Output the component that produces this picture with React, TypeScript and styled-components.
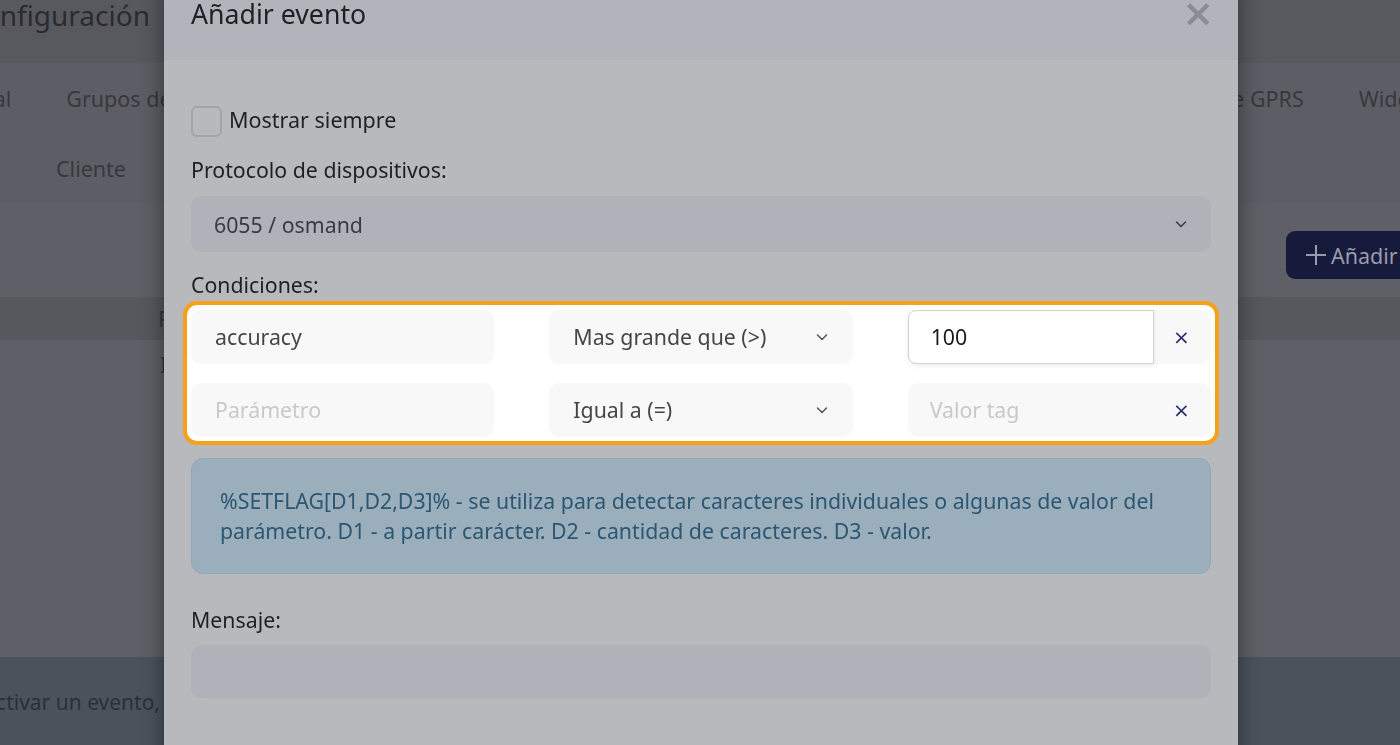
import React from "react";
import styled, { createGlobalStyle } from "styled-components";

const Global = createGlobalStyle`
  html, body { margin: 0; padding: 0; height: 100%; }
  body {
    font-family: "Noto Sans", "Open Sans", Arial, sans-serif;
    background: #5e5f66;
    overflow: hidden;
  }
  #root { height: 100%; }
`;

/* ---------- background page (dimmed) ---------- */
const Page = styled.div`
  width: 1400px;
  height: 745px;
  display: flex;
  flex-direction: column;
  background: #5f6067;
  overflow: hidden;
`;

const TopBar = styled.div`
  height: 63px;
  flex: none;
  background: #58595f;
  display: flex;
  align-items: flex-start;
`;

const PageTitle = styled.h1`
  margin: -2px 0 0 -35px;
  font-size: 28px;
  font-weight: 400;
  line-height: 34px;
  color: #2a2b30;
  white-space: nowrap;
`;

const Tabs = styled.div`
  height: 140px;
  flex: none;
  background: #5d5e65;
  display: flex;
  flex-direction: column;
`;

const TabRow = styled.div`
  height: 70px;
  display: flex;
  align-items: center;
  justify-content: space-between;
  font-size: 21.5px;
  color: #37383e;
  white-space: nowrap;
`;

const TabGroup = styled.div<{ $left?: number; $right?: number }>`
  display: flex;
  gap: 55px;
  margin-left: ${(p) => p.$left ?? 0}px;
  margin-right: ${(p) => p.$right ?? 0}px;
`;

const Toolbar = styled.div`
  height: 94px;
  flex: none;
  display: flex;
  align-items: center;
  justify-content: flex-end;
  padding-top: 10px;
  box-sizing: border-box;
`;

const AddButton = styled.div`
  height: 48px;
  width: 150px;
  margin-right: -36px;
  border-radius: 9px;
  background: #161b3c;
  color: #9a9cab;
  font-size: 21.5px;
  display: flex;
  align-items: center;
  gap: 4px;
  padding-left: 19px;
  box-sizing: border-box;
  white-space: nowrap;
  overflow: hidden;
  svg { flex: none; }
`;

const TableHead = styled.div`
  height: 43px;
  flex: none;
  background: #57585e;
  display: flex;
  align-items: center;
  padding-left: 158px;
  font-size: 21.5px;
  color: #36373c;
`;

const TableBody = styled.div`
  flex: 1;
  padding: 10px 0 0 160px;
  font-size: 21.5px;
  color: #36373c;
`;

const FooterBand = styled.div`
  display: flex;
  background: #4a535c;
`;

const Footer = styled.div`
  height: 88px;
  flex: none;
  display: flex;
  align-items: center;
  justify-content: flex-end;
  width: 164px;
  padding-right: 4px;
  font-size: 21px;
  color: #2b3037;
  white-space: nowrap;
  padding-top: 2px;
  box-sizing: border-box;
`;

/* ---------- modal ---------- */
const Overlay = styled.div`
  position: fixed;
  inset: 0;
  pointer-events: none;
`;

const Modal = styled.div`
  position: absolute;
  top: -14px;
  left: 164px;
  width: 1074px;
  height: 800px;
  background: #b8b9bd;
  box-shadow: 0 0 22px rgba(0, 0, 0, 0.45);
  display: flex;
  flex-direction: column;
`;

const ModalHeader = styled.div`
  flex: none;
  height: 74px;
  box-sizing: border-box;
  padding: 12px 27px 0 27px;
  background: #b3b4bb;
  display: flex;
  justify-content: space-between;
  align-items: flex-start;
`;

const ModalTitle = styled.h2`
  margin: 0;
  font-size: 26.7px;
  font-weight: 400;
  line-height: 32px;
  color: #1f2024;
`;

const CloseX = styled.span`
  font-size: 38px;
  line-height: 30px;
  font-weight: 700;
  color: #8b8c92;
  margin-right: -3px;
  font-family: "DejaVu Sans", "Noto Sans", sans-serif;
`;

const ModalBody = styled.div`
  padding: 46px 27px 0 27px;
  display: flex;
  flex-direction: column;
  font-size: 21.3px;
`;

const CheckRow = styled.label`
  display: flex;
  align-items: center;
  gap: 7px;
  font-size: 21.5px;
  color: #1f2024;
  height: 31px;
`;

const CheckText = styled.span`
  margin-top: -4px;
`;

const CheckBox = styled.span`
  width: 31px;
  height: 31px;
  box-sizing: border-box;
  border: 2px solid #a3a4aa;
  border-radius: 6px;
`;

const Label = styled.div<{ $top: number }>`
  margin-top: ${(p) => p.$top}px;
  line-height: 30px;
  color: #1f2024;
`;

const DimField = styled.div<{ $top?: number; $h: number }>`
  margin-top: ${(p) => p.$top ?? 11}px;
  height: ${(p) => p.$h}px;
  border-radius: 10px;
  background: #b1b2b9;
  display: flex;
  align-items: center;
  justify-content: space-between;
  padding: 0 23px;
  color: #3a3b40;
`;

const Chevron = ({ color, size = 14 }: { color: string; size?: number }) => (
  <svg width={size} height={size} viewBox="0 0 14 14" fill="none">
    <path d="M2.5 5 L7 9.5 L11.5 5" stroke={color} strokeWidth="1.5" strokeLinecap="round" strokeLinejoin="round" />
  </svg>
);

const Highlight = styled.div`
  margin: 1px -8px 0 -8px;
  border: 4px solid #f5a11a;
  border-radius: 14px;
  background: #ffffff;
  padding: 5px 4px 4px 4px;
  display: flex;
  flex-direction: column;
  gap: 19px;
`;

const CondRow = styled.div`
  display: grid;
  grid-template-columns: 1fr 1fr 1fr;
  column-gap: 55px;
  height: 54px;
`;

const CondInput = styled.div<{ $placeholder?: boolean }>`
  border-radius: 10px;
  background: #f8f8f8;
  display: flex;
  align-items: center;
  padding-left: 24px;
  padding-bottom: 1px;
  color: ${(p) => (p.$placeholder ? "#c9c9c9" : "#454545")};
`;

const CondSelect = styled(CondInput)`
  justify-content: space-between;
  padding-right: 24px;
`;

const ValueGroup = styled.div`
  border-radius: 10px;
  background: #f8f8f8;
  display: flex;
  align-items: stretch;
`;

const ValueInput = styled.div<{ $focused?: boolean; $placeholder?: boolean }>`
  flex: 1;
  display: flex;
  align-items: center;
  padding-left: 22px;
  padding-bottom: 1px;
  color: ${(p) => (p.$placeholder ? "#c9c9c9" : "#1a1a1a")};
  border-radius: 8px 0 0 8px;
  ${(p) =>
    p.$focused &&
    `
    background: #ffffff;
    border: 1px solid #d2d2d2;
    box-shadow: 0 2px 5px rgba(0,0,0,0.08);
  `}
`;

const RemoveBtn = styled.div`
  width: 57px;
  flex: none;
  display: flex;
  align-items: center;
  justify-content: center;
  padding-right: 2px;
  box-sizing: border-box;
  font-size: 20px;
  color: #2a2c6b;
  font-family: "DejaVu Sans", sans-serif;
`;

const InfoBox = styled.div`
  margin-top: 13px;
  border: 1px solid #8ea8b9;
  border-radius: 12px;
  background: #9aaebb;
  padding: 27px 28px;
  line-height: 30px;
  color: #2c5672;
`;

export default function App() {
  return (
    <>
      <Global />
      <Page>
        <TopBar>
          <PageTitle>Configuración</PageTitle>
        </TopBar>
        <Tabs>
          <TabRow>
            <TabGroup $left={-68}>
              <span>General</span>
              <span>Grupos de usuarios</span>
            </TabGroup>
            <TabGroup $right={-41}>
              <span>Comandos de GPRS</span>
              <span>Widgets</span>
            </TabGroup>
          </TabRow>
          <TabRow>
            <TabGroup $left={56}>
              <span>Cliente</span>
            </TabGroup>
          </TabRow>
        </Tabs>
        <Toolbar>
          <AddButton>
            <svg width="22" height="22" viewBox="0 0 22 22">
              <path d="M11 1 V21 M1 11 H21" stroke="#9a9cab" strokeWidth="2" />
            </svg>
            Añadir evento
          </AddButton>
        </Toolbar>
        <TableHead>Protocolo</TableHead>
        <TableBody>Ignición</TableBody>
        <FooterBand>
          <Footer>Para activar un evento,</Footer>
        </FooterBand>
      </Page>

      <Overlay>
        <Modal>
          <ModalHeader>
            <ModalTitle>Añadir evento</ModalTitle>
            <CloseX>×</CloseX>
          </ModalHeader>
          <ModalBody>
            <CheckRow>
              <CheckBox />
              <CheckText>Mostrar siempre</CheckText>
            </CheckRow>
            <Label $top={18}>Protocolo de dispositivos:</Label>
            <DimField $h={56}>
              6055 / osmand
              <Chevron color="#3b3c42" />
            </DimField>
            <Label $top={18}>Condiciones:</Label>
            <Highlight>
              <CondRow>
                <CondInput>accuracy</CondInput>
                <CondSelect>
                  Mas grande que (&gt;)
                  <Chevron color="#555" />
                </CondSelect>
                <ValueGroup>
                  <ValueInput $focused>100</ValueInput>
                  <RemoveBtn>×</RemoveBtn>
                </ValueGroup>
              </CondRow>
              <CondRow>
                <CondInput $placeholder>Parámetro</CondInput>
                <CondSelect>
                  Igual a (=)
                  <Chevron color="#555" />
                </CondSelect>
                <ValueGroup>
                  <ValueInput $placeholder>Valor tag</ValueInput>
                  <RemoveBtn>×</RemoveBtn>
                </ValueGroup>
              </CondRow>
            </Highlight>
            <InfoBox>
              %SETFLAG[D1,D2,D3]% - se utiliza para detectar caracteres individuales o algunas de valor del
              parámetro. D1 - a partir carácter. D2 - cantidad de caracteres. D3 - valor.
            </InfoBox>
            <Label $top={31}>Mensaje:</Label>
            <DimField $top={10} $h={53} />
          </ModalBody>
        </Modal>
      </Overlay>
    </>
  );
}
